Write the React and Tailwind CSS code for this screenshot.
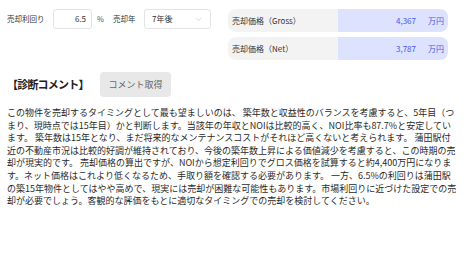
import React from 'react';
import { ChevronDown } from 'lucide-react';

// 表示と同じ位置で改行する
const commentLines = [
  'この物件を売却するタイミングとして最も望ましいのは、 築年数と収益性のバランスを考慮すると、5年目（つ',
  'まり、現時点では15年目）かと判断します。当該年の年収とNOIは比較的高く、NOI比率も87.7%と安定してい',
  'ます。 築年数は15年となり、まだ将来的なメンテナンスコストがそれほど高くないと考えられます。 蒲田駅付',
  '近の不動産市況は比較的好調が維持されており、今後の築年数上昇による価値減少を考慮すると、この時期の売',
  '却が現実的です。 売却価格の算出ですが、NOIから想定利回りでグロス価格を試算すると約4,400万円になりま',
  'す。ネット価格はこれより低くなるため、手取り額を確認する必要があります。 一方、6.5%の利回りは蒲田駅',
  'の築15年物件としてはやや高めで、現実には売却が困難な可能性もあります。市場利回りに近づけた設定での売',
  '却が必要でしょう。客観的な評価をもとに適切なタイミングでの売却を検討してください。',
];

const PriceRow = ({ label, value }) => (
  <div className="flex h-[23px] rounded-[8px] overflow-hidden text-[8px]">
    <div className="w-1/2 bg-[#f3f3f3] flex items-center pl-[4px] text-[#333]">{label}</div>
    <div className="w-1/2 bg-[#dde2ff] flex items-center justify-end pr-[4px] text-[#4a57e8]">
      <span>{value}</span>
      <span className="ml-[12px]">万円</span>
    </div>
  </div>
);

export default function App() {
  return (
    <div className="w-[464px] h-[257px] bg-white text-[#2a2a2a] font-['Noto_Sans_CJK_JP',sans-serif] pl-[7px] pt-[9px] overflow-hidden">
      <div className="flex items-start">
        {/* 条件入力 */}
        <div className="flex items-center h-[20px] w-[221px] text-[7.5px] text-[#333]">
          <span className="w-[46px] shrink-0">売却利回り</span>
          <div className="w-[39px] h-[20px] shrink-0 border border-[#e3e3e3] rounded-[3px] flex items-center justify-end pr-[5px] text-[8px]">
            6.5
          </div>
          <span className="w-[21px] shrink-0 pl-[5px] text-[#555]">%</span>
          <span className="w-[31px] shrink-0">売却年</span>
          <div className="w-[67px] h-[20px] shrink-0 border border-[#e3e3e3] rounded-[3px] flex items-center justify-between pl-[7px] pr-[7px] text-[8px]">
            <span>7年後</span>
            <ChevronDown className="w-[9px] h-[9px] text-[#bbb]" strokeWidth={1.5} />
          </div>
        </div>

        {/* 売却価格 */}
        <div className="w-[220px] flex flex-col gap-[5px]">
          <PriceRow label="売却価格（Gross）" value="4,367" />
          <PriceRow label="売却価格（Net）" value="3,787" />
        </div>
      </div>

      <div className="flex items-center mt-[12px]">
        <h2 className="w-[93px] shrink-0 text-[11px] tracking-[-0.8px] font-bold text-[#222] whitespace-nowrap">【診断コメント】</h2>
        <button className="w-[71px] h-[25px] rounded-[4px] bg-[#e8e8e8] text-[#666] text-[9px]">
          コメント取得
        </button>
      </div>

      <p className="mt-[10px] text-[9px] leading-[12.6px] whitespace-nowrap">
        {commentLines.map((line, i) => (
          <React.Fragment key={i}>
            {line}
            {i < commentLines.length - 1 && <br />}
          </React.Fragment>
        ))}
      </p>
    </div>
  );
}
